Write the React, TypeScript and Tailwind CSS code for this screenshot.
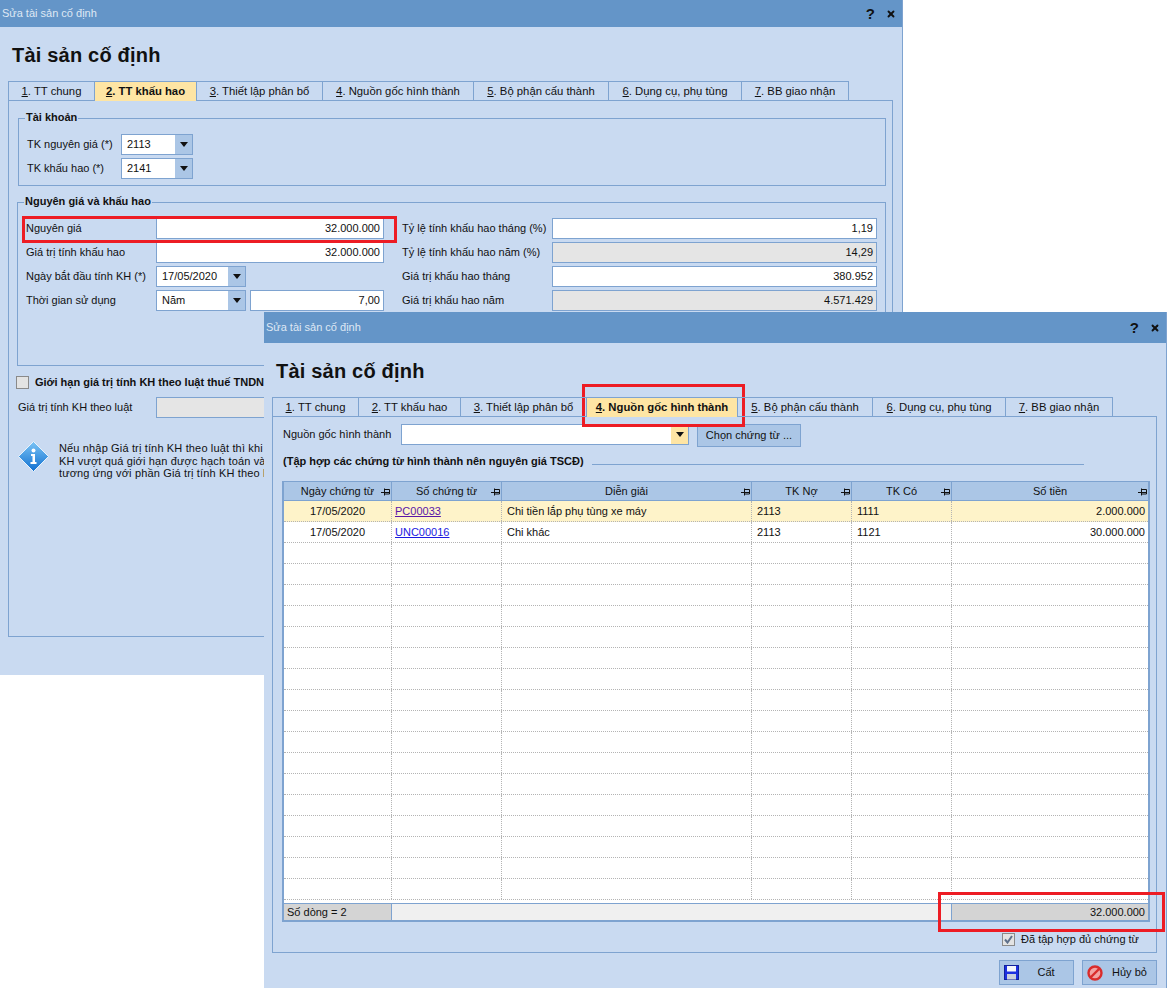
import type { ReactNode } from "react";
import { X } from "lucide-react";

const tabs = [
  { n: "1", label: ". TT chung", w: "w-[87px]" },
  { n: "2", label: ". TT khấu hao", w: "w-[102px]" },
  { n: "3", label: ". Thiết lập phân bổ", w: "w-[126px]" },
  { n: "4", label: ". Nguồn gốc hình thành", w: "w-[151px]" },
  { n: "5", label: ". Bộ phận cấu thành", w: "w-[135px]" },
  { n: "6", label: ". Dụng cụ, phụ tùng", w: "w-[133px]" },
  { n: "7", label: ". BB giao nhận", w: "w-[107px]" },
];

const TabBar = ({ active }: { active: number }) => (
  <div className="ml-[8px] flex h-[20px] relative z-10 text-[11.3px]">
    {tabs.map((t, i) => (
      <div
        key={t.n}
        className={
          i === active
            ? `${t.w} flex items-center justify-center border-t border-r border-[#7ea3d0] bg-[#fee5a4] font-bold`
            : `${t.w} flex items-center justify-center border-t border-r border-b border-[#7ea3d0] first:border-l`
        }
      >
        <span>
          <u>{t.n}</u>
          {t.label}
        </span>
      </div>
    ))}
  </div>
);

const TitleBar = ({ className }: { className: string }) => (
  <div className={`${className} flex items-center justify-between bg-[#6495c8] pl-[2px] pr-[6px] text-[#dfe8f4]`}>
    <span>Sửa tài sản cố định</span>
    <span className="flex items-center gap-[11px] text-[#111]">
      <span className="text-[15px] font-bold leading-none">?</span>
      <X size={10} strokeWidth={4.5} />
    </span>
  </div>
);

const Arrow = () => (
  <svg width="8" height="5" viewBox="0 0 8 5">
    <polygon points="0,0 8,0 4,5" fill="#111" />
  </svg>
);

const Combo = ({ value, className, yellow }: { value: string; className: string; yellow?: boolean }) => (
  <div className={`${className} flex h-[21px] border border-[#7ea3d0] bg-white`}>
    <span className="flex-1 pl-[5px] leading-[19px]">{value}</span>
    <span className={`flex w-[17px] items-center justify-center ${yellow ? "bg-[#fee5a4]" : "bg-[#abc6e6]"}`}>
      <Arrow />
    </span>
  </div>
);

const Field = ({ value, className, gray }: { value?: string; className: string; gray?: boolean }) => (
  <div
    className={`${className} h-[21px] border border-[#7ea3d0] pr-[3px] text-right leading-[19px] ${gray ? "bg-[#e5e5e5]" : "bg-white"}`}
  >
    {value}
  </div>
);

const FormRow = ({ label, left, rightLabel, right }: { label: string; left: ReactNode; rightLabel: string; right: ReactNode }) => (
  <div className="flex h-[21px] items-center whitespace-nowrap">
    <span className="w-[130px]">{label}</span>
    <div className="flex w-[228px] justify-between">{left}</div>
    <span className="ml-[18px] w-[150px]">{rightLabel}</span>
    {right}
  </div>
);

const Pin = () => (
  <svg className="absolute right-[1px] top-[6px]" width="9" height="8" viewBox="0 0 9 8" fill="none" stroke="#111">
    <path d="M0 4.5H3M3.5 0.5V7.5M3.5 1.5H8.5V6H3.5M3.5 4.5H8.5" />
  </svg>
);

const Checkbox = ({ checked }: { checked?: boolean }) => (
  <span className="flex h-[13px] w-[13px] items-center justify-center border border-[#8a8a8a] bg-[#e3e3e3]">
    {checked && (
      <svg width="9" height="9" viewBox="0 0 9 9" fill="none" stroke="#5d6f8a" strokeWidth="2">
        <path d="M1 4.5L3.5 7.5L8 1" />
      </svg>
    )}
  </span>
);

const InfoIcon = () => (
  <svg width="31" height="31" viewBox="0 0 31 31">
    <defs>
      <linearGradient id="infoFill" x1="0" y1="0" x2="0" y2="1">
        <stop offset="0" stopColor="#7cc4f5" />
        <stop offset="1" stopColor="#0f6fd0" />
      </linearGradient>
    </defs>
    <polygon points="15.5,0.5 30.5,15.5 15.5,30.5 0.5,15.5" fill="url(#infoFill)" stroke="#e8f3fc" strokeLinejoin="round" />
    <circle cx="15.5" cy="9.5" r="2" fill="#fff" />
    <path d="M13 13H17V21H18.5V23H12.5V21H14.5V15H13Z" fill="#fff" />
  </svg>
);

const SaveIcon = () => (
  <svg width="15" height="15" viewBox="0 0 15 15">
    <rect x="0.5" y="0.5" width="14" height="14" fill="#1c2fe0" stroke="#10209c" />
    <rect x="3" y="1" width="9" height="5.5" fill="#f4f6fb" />
    <rect x="3" y="9" width="9" height="5.5" fill="#c9cfdb" />
  </svg>
);

const CancelIcon = () => (
  <svg width="16" height="16" viewBox="0 0 16 16" fill="none">
    <circle cx="8" cy="8" r="6.5" fill="#f2a3a3" stroke="#d92c2c" strokeWidth="2.4" />
    <path d="M3.5 12.5L12.5 3.5" stroke="#d92c2c" strokeWidth="2.4" />
  </svg>
);

const DepreciationWindow = () => (
  <div className="absolute left-0 top-0 h-[675px] w-[903px] bg-[#c9daf1] border-r border-[#7ea3d0]">
    <TitleBar className="h-[27px]" />
    <h1 className="ml-[12px] mt-[15px] mb-[13px] h-[26px] text-[20px] font-bold leading-[26px] tracking-[0.2px]">Tài sản cố định</h1>
    <TabBar active={1} />
    <div className="-mt-px ml-[8px] h-[537px] w-[885px] border border-[#7ea3d0] pt-[10px]">
      <fieldset className="ml-[9px] w-[868px] border border-[#7ea3d0] pl-[8px] pt-[9px] pb-[6px]">
        <legend className="ml-[-2px] h-[14px] px-[1px] font-bold leading-[12px]">Tài khoản</legend>
        <div className="flex flex-col gap-[3px]">
          <div className="flex h-[21px] items-center">
            <span className="w-[94px]">TK nguyên giá (*)</span>
            <Combo value="2113" className="w-[72px]" />
          </div>
          <div className="flex h-[21px] items-center">
            <span className="w-[94px]">TK khấu hao (*)</span>
            <Combo value="2141" className="w-[72px]" />
          </div>
        </div>
      </fieldset>
      <fieldset className="ml-[8px] mt-[9px] h-[171px] w-[869px] border border-[#7ea3d0] pl-[8px] pt-[9px]">
        <legend className="ml-[-2px] h-[14px] px-[1px] font-bold leading-[12px]">Nguyên giá và khấu hao</legend>
        <div className="flex flex-col gap-[3px]">
          <FormRow label="Nguyên giá" left={<Field value="32.000.000" className="w-full" />} rightLabel="Tỷ lệ tính khấu hao tháng (%)" right={<Field value="1,19" className="w-[325px]" />} />
          <FormRow label="Giá trị tính khấu hao" left={<Field value="32.000.000" className="w-full" />} rightLabel="Tỷ lệ tính khấu hao năm (%)" right={<Field value="14,29" gray className="w-[325px]" />} />
          <FormRow label="Ngày bắt đầu tính KH (*)" left={<Combo value="17/05/2020" className="w-[90px]" />} rightLabel="Giá trị khấu hao tháng" right={<Field value="380.952" className="w-[325px]" />} />
          <FormRow
            label="Thời gian sử dụng"
            left={
              <>
                <Combo value="Năm" className="w-[90px]" />
                <Field value="7,00" className="w-[134px]" />
              </>
            }
            rightLabel="Giá trị khấu hao năm"
            right={<Field value="4.571.429" gray className="w-[325px]" />}
          />
        </div>
      </fieldset>
      <div className="ml-[7px] mt-[10px] flex h-[13px] items-center gap-[6px] font-bold whitespace-nowrap">
        <Checkbox />
        <span>Giới hạn giá trị tính KH theo luật thuế TNDN</span>
      </div>
      <div className="ml-[9px] mt-[8px] flex h-[21px] items-center">
        <span className="w-[138px]">Giá trị tính KH theo luật</span>
        <Field className="w-[228px]" gray />
      </div>
      <div className="ml-[9px] mt-[23px] flex">
        <InfoIcon />
        <p className="ml-[10px] mt-[1px] leading-[12.5px] whitespace-nowrap tracking-[0.15px]">
          Nếu nhập Giá trị tính KH theo luật thì khi tính
          <br />
          KH vượt quá giới hạn được hạch toán vào
          <br />
          tương ứng với phần Giá trị tính KH theo luật
        </p>
      </div>
    </div>
  </div>
);

const cols = "grid grid-cols-[108px_110px_250px_100px_100px_196px]";
const cell = "h-[20px] border-r border-dotted border-[#b4b4b4] leading-[20px]";

const rows = [
  { date: "17/05/2020", no: "PC00033", link: "text-[#5a17a8]", desc: "Chi tiền lắp phụ tùng xe máy", debit: "2113", credit: "1111", amount: "2.000.000", bg: "bg-[#fef3c9]" },
  { date: "17/05/2020", no: "UNC00016", link: "text-[#1a1ae0]", desc: "Chi khác", debit: "2113", credit: "1121", amount: "30.000.000", bg: "bg-white" },
];

const headers = ["Ngày chứng từ", "Số chứng từ", "Diễn giải", "TK Nợ", "TK Có", "Số tiền"];

const VoucherTable = () => (
  <div className="ml-[9px] mt-[13px] w-[868px] border-x-2 border-b-2 border-t border-[#7ea3d0] bg-white">
    <div className={`${cols} h-[19px] border-b border-[#7ea3d0] bg-[#abc6e6]`}>
      {headers.map((h) => (
        <div key={h} className="relative border-r border-[#7ea3d0] text-center leading-[18px] last:border-r-0">
          {h}
          <Pin />
        </div>
      ))}
    </div>
    {Array.from({ length: 19 }, (_, i) => {
      const r = rows[i];
      return (
        <div key={i} className={`${cols} border-b border-dotted border-[#b4b4b4] ${r ? r.bg : "bg-white"}`}>
          <div className={`${cell} text-center`}>{r?.date}</div>
          <div className={`${cell} pl-[3px]`}>{r && <u className={r.link}>{r.no}</u>}</div>
          <div className={`${cell} pl-[5px]`}>{r?.desc}</div>
          <div className={`${cell} pl-[5px]`}>{r?.debit}</div>
          <div className={`${cell} pl-[5px]`}>{r?.credit}</div>
          <div className="h-[20px] pr-[3px] text-right leading-[20px]">{r?.amount}</div>
        </div>
      );
    })}
    <div className={`${cols} mt-[3px] h-[17px] border-t border-[#7ea3d0] bg-[#f0f0f0] leading-[16px]`}>
      <div className="border-r border-[#7ea3d0] bg-[#d4d4d4] pl-[3px]">Số dòng = 2</div>
      <div className="col-span-4 border-r border-[#7ea3d0]" />
      <div className="bg-[#d4d4d4] pr-[3px] text-right">32.000.000</div>
    </div>
  </div>
);

const FooterButton = ({ icon, label }: { icon: ReactNode; label: string }) => (
  <div className="flex h-[25px] w-[75px] items-center border border-[#7ea3d0] bg-[#abc6e6] pl-[4px]">
    {icon}
    <span className="flex-1 text-center">{label}</span>
  </div>
);

const OriginWindow = () => (
  <div className="absolute left-[264px] top-[312px] h-[676px] w-[903px] bg-[#c9daf1] border-r border-[#7ea3d0]">
    <TitleBar className="h-[31px]" />
    <h1 className="ml-[12px] mt-[15px] mb-[13px] h-[26px] text-[20px] font-bold leading-[26px] tracking-[0.2px]">Tài sản cố định</h1>
    <TabBar active={3} />
    <div className="-mt-px ml-[8px] h-[537px] w-[885px] border border-[#7ea3d0] pt-[7px]">
      <div className="flex items-start pl-[10px]">
        <span className="w-[118px] leading-[21px] whitespace-nowrap">Nguồn gốc hình thành</span>
        <Combo value="" yellow className="w-[288px]" />
        <div className="ml-[8px] flex h-[23px] w-[104px] items-center justify-center border border-[#7ea3d0] bg-[#abc6e6]">Chọn chứng từ ...</div>
      </div>
      <div className="mt-[7px] flex h-[14px] items-center pl-[10px]">
        <span className="w-[309px] font-bold whitespace-nowrap">(Tập hợp các chứng từ hình thành nên nguyên giá TSCĐ)</span>
        <span className="mt-[6px] h-px w-[492px] bg-[#7ea3d0]" />
      </div>
      <VoucherTable />
      <div className="mr-[17px] mt-[11px] flex h-[13px] items-center justify-end gap-[6px]">
        <Checkbox checked />
        <span>Đã tập hợp đủ chứng từ</span>
      </div>
    </div>
    <div className="mr-[9px] mt-[7px] flex justify-end gap-[8px]">
      <FooterButton icon={<SaveIcon />} label="Cất" />
      <FooterButton icon={<CancelIcon />} label="Hủy bỏ" />
    </div>
  </div>
);

export default function App() {
  return (
    <div className="relative h-[988px] w-[1170px] overflow-hidden bg-white font-['Liberation_Sans',sans-serif] text-[11px] text-[#111]">
      <DepreciationWindow />
      <OriginWindow />
      <div className="absolute left-[22px] top-[216px] h-[27px] w-[375px] border-[3px] border-[#ed1c24]" />
      <div className="absolute left-[582px] top-[384px] h-[43px] w-[163px] border-[3px] border-[#ed1c24]" />
      <div className="absolute left-[938px] top-[892px] h-[40px] w-[227px] border-[3px] border-[#ed1c24]" />
    </div>
  );
}
